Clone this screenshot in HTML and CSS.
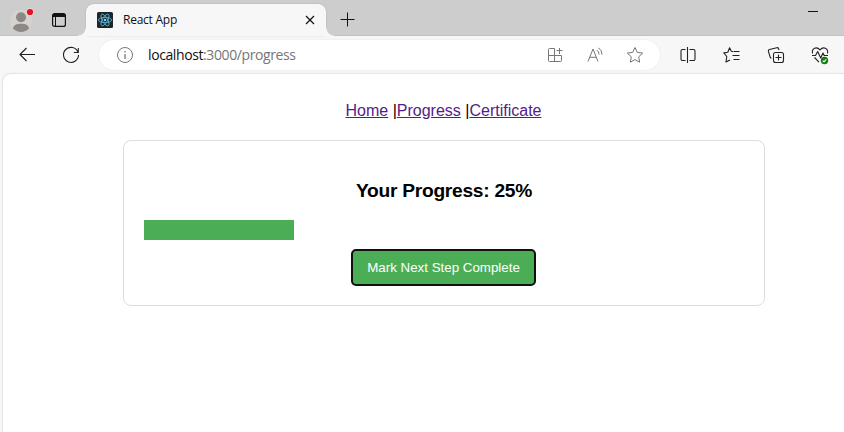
FILE: index.html
```html
<!DOCTYPE html>
<html lang="en">
<head>
<meta charset="utf-8">
<title>React App</title>
<link rel="stylesheet" href="styles.css">
</head>
<body>
<div class="browser">
  <header class="tabstrip">
    <svg class="avatar" viewBox="0 0 24 24">
      <circle cx="11" cy="13" r="11" fill="#d6d3cf"/>
      <circle cx="11" cy="9.3" r="5" fill="#8b8885"/>
      <path d="M3 20.500C3.500 17 6.500 15.700 11 15.700S18.500 17 19 20.500A11 11 0 0 1 3 20.500Z" fill="#8b8885"/>
      <circle cx="20" cy="4" r="3.800" fill="#dedede"/>
      <circle cx="20" cy="4" r="3.100" fill="#e81123"/>
    </svg>
    <svg class="workspaces" viewBox="0 0 14 14" fill="none" stroke="#111">
      <rect x=".6" y=".6" width="12.800" height="12.800" rx="2" stroke-width="1.200"/>
      <path d="M1 1h12v3H1z" fill="#111" stroke="none"/>
      <path d="M3.500 4v9.500"/>
    </svg>
    <div class="tab">
      <svg class="favicon" viewBox="0 0 16 16">
        <rect width="16" height="16" rx="1.500" fill="#20232a"/>
        <g fill="none" stroke="#53b9d4" stroke-width=".85">
          <ellipse cx="8" cy="8" rx="6.600" ry="2.600"/>
          <ellipse cx="8" cy="8" rx="6.600" ry="2.600" transform="rotate(60 8 8)"/>
          <ellipse cx="8" cy="8" rx="6.600" ry="2.600" transform="rotate(120 8 8)"/>
        </g>
        <circle cx="8" cy="8" r="1.300" fill="#61dafb"/>
      </svg>
      <span class="tab-title">React App</span>
      <svg class="close" viewBox="0 0 10 10" stroke="#111" stroke-width="1.200"><path d="M1 1l8 8M9 1l-8 8"/></svg>
    </div>
    <svg class="new-tab" viewBox="0 0 15 15" stroke="#111"><path d="M7.500 .5v14M.5 7.500h14"/></svg>
    <svg class="minimize" viewBox="0 0 10 3" stroke="#111"><path d="M0 1.500h10"/></svg>
  </header>

  <div class="toolbar">
    <svg class="icon back" viewBox="0 0 20 20"><path d="M18 9.500H3M9.500 3L3 9.500l6.500 6.500"/></svg>
    <svg class="icon reload" viewBox="0 0 20 20"><path d="M17 7.200A7.500 7.500 0 1 0 17.500 10M17.300 3v4.500h-4.500"/></svg>
    <div class="address">
      <svg class="icon info" viewBox="0 0 20 20"><circle cx="10" cy="10" r="7.500"/><path d="M10 9v5M10 6v1.500" stroke-width="1.300"/></svg>
      <span class="url">localhost<span class="url-path">:3000/progress</span></span>
      <svg class="icon apps" viewBox="0 0 20 20"><path d="M9.500 3.500h-5a1 1 0 0 0-1 1v11a1 1 0 0 0 1 1h11a1 1 0 0 0 1-1v-5H3.500M9.500 3.500v13M14.500 3v6M11.500 5.500h6"/></svg>
      <svg class="icon read" viewBox="0 0 20 20"><path d="M3 16.500L8 4l5 12.500M4.700 12.300h6.600M12 5.200a5 5 0 0 1 2 4.300M13.500 2.800a8 8 0 0 1 3.500 6.700"/></svg>
      <svg class="icon star" viewBox="0 0 20 20"><path d="M10 2.500l2.300 4.900 5.400.7-4 3.700 1 5.400-4.700-2.600-4.700 2.600 1-5.400-4-3.700 5.400-.7z"/></svg>
    </div>
    <svg class="icon split" viewBox="0 0 20 20"><path d="M7.500 4.500H4.500a1.500 1.500 0 0 0-1.500 1.500v8a1.500 1.500 0 0 0 1.500 1.500h3M11.500 4.500h4a1.500 1.500 0 0 1 1.500 1.500v8a1.500 1.500 0 0 1-1.500 1.500h-4M9.500 2v16"/></svg>
    <svg class="icon favorites" viewBox="0 0 20 20"><path d="M11 6.500L9.300 6.300 7.600 2.800 5.800 7.200l-4 .7 3 3.600-.8 5.500 4-2.100M11.500 6.500h6M10.500 10.500h7M11.500 14.500h6"/></svg>
    <svg class="icon collections" viewBox="0 0 20 20"><rect x="7.500" y="7.500" width="10" height="10" rx="2"/><path d="M12.500 9.500v6M9.500 12.500h6M13 5.200l-.4-1.500a1.500 1.500 0 0 0-1.800-1L3.500 4.500a1.500 1.500 0 0 0-1.100 1.800l1.800 6a1.500 1.500 0 0 0 1.300 1"/></svg>
    <svg class="icon heart" viewBox="0 0 20 20"><path d="M2.500 8.500C1.500 3.500 6.500 1 10 4.800c3.500-3.800 8.500-1.300 7.500 3.700M2 10.500h3.500l2.200-4 3 6.500 2.300-5 1.200 2.500H18M4.500 12.500l4.500 4.700"/><circle cx="14.500" cy="15.500" r="3.700" fill="#107c10" stroke="none"/><path class="tick" d="M12.800 15.700l1.200 1.200 2.300-2.500"/></svg>
  </div>

  <main class="page">
    <nav class="links"><a href="#">Home</a> |<a href="#">Progress</a> |<a href="#">Certificate</a></nav>
    <section class="card">
      <h2>Your Progress: 25%</h2>
      <div class="track"><div class="fill" style="width:25%"></div></div>
      <button type="button">Mark Next Step Complete</button>
    </section>
  </main>
</div>
</body>
</html>
```
FILE: styles.css
```css
* { box-sizing: border-box; }
body { margin: 0; overflow: hidden; }
svg { flex: none; display: block; }

.browser {
  width: 844px;
  height: 432px;
  overflow: hidden;
  background: #f7f7f7;
  font-family: "Open Sans", "Noto Sans", sans-serif;
}

.tabstrip {
  display: flex;
  align-items: flex-start;
  height: 36px;
  background: #cdcdcd;
  box-shadow: inset 0 -1px #c3c3c3;
}
.avatar { width: 24px; height: 24px; margin: 8px 0 0 10px; }
.workspaces { width: 14px; height: 14px; margin: 13px 0 0 18px; }
.tab {
  position: relative;
  display: flex;
  align-items: center;
  width: 240px;
  height: 32px;
  margin: 4px 0 0 20px;
  padding: 0 11px;
  background: #f7f7f7;
  border-radius: 8px 8px 0 0;
  box-shadow: 0 0 2px rgba(0, 0, 0, .15);
}
.tab::before,
.tab::after {
  content: "";
  position: absolute;
  bottom: 0;
  width: 8px;
  height: 8px;
}
.tab::before { left: -8px; background: radial-gradient(circle at 0 0, #cdcdcd 7px, #f7f7f7 8px); }
.tab::after { right: -8px; background: radial-gradient(circle at 100% 0, #cdcdcd 7px, #f7f7f7 8px); }
.favicon { width: 16px; height: 16px; }
.tab-title { margin-left: 10px; font-size: 12px; line-height: 16px; letter-spacing: -.25px; color: #111; white-space: nowrap; }
.close { width: 10px; height: 10px; margin: 0 0 0 auto; }
.new-tab { width: 15px; height: 15px; margin: 12px 0 0 14px; }
.minimize { width: 10px; height: 3px; margin: 10px 26px 0 auto; }

.toolbar { display: flex; align-items: center; height: 38px; }
.icon { width: 20px; height: 20px; fill: none; stroke: #222; stroke-width: 1.1; stroke-linejoin: round; }
.back { margin-left: 17px; }
.reload { margin-left: 24px; }
.address {
  display: flex;
  align-items: center;
  width: 561px;
  height: 30px;
  margin-left: 18px;
  background: #fff;
  border-radius: 15px;
  box-shadow: 0 0 2px rgba(0, 0, 0, .08);
}
.address .icon { stroke: #777; stroke-width: 1; }
.info { margin-left: 16px; }
.url { flex: 1; margin-left: 13px; font-size: 14px; line-height: 20px; letter-spacing: -.4px; color: #111; }
.url-path { color: #767676; }
.read, .star { margin-left: 20px; }
.star { margin-right: 15px; }
.split { margin-left: 18px; }
.favorites, .collections, .heart { margin-left: 24px; }
.icon .tick { stroke: #fff; }

.page {
  width: 882px;
  height: 360px;
  margin-left: 3px;
  padding-top: 27px;
  background: #fff;
  border-radius: 8px 0 0 0;
  box-shadow: 0 0 2px rgba(0, 0, 0, .25);
  font-family: "Liberation Sans", Arial, sans-serif;
  text-align: center;
}
.links { height: 20px; padding-right: 1px; font-size: 16px; line-height: 20px; color: #000; }
.links a { color: #551a8b; }
.card {
  width: 642px;
  height: 166px;
  margin: 19px auto 0;
  padding: 20px;
  border: 1px solid #ddd;
  border-radius: 8px;
}
.card h2 { margin: 17px 0; font-size: 19.2px; line-height: 25px; letter-spacing: -.27px; color: #000; }
.track { height: 20px; }
.fill { height: 100%; background: #4bae57; }
.card button {
  width: 185px;
  height: 37px;
  margin: 9px 1px 0 0;
  padding: 0;
  border: 2px solid #101010;
  border-radius: 5px;
  background: #4bae57;
  color: #fff;
  font: 13.333px "Liberation Sans", Arial, sans-serif;
}
```
